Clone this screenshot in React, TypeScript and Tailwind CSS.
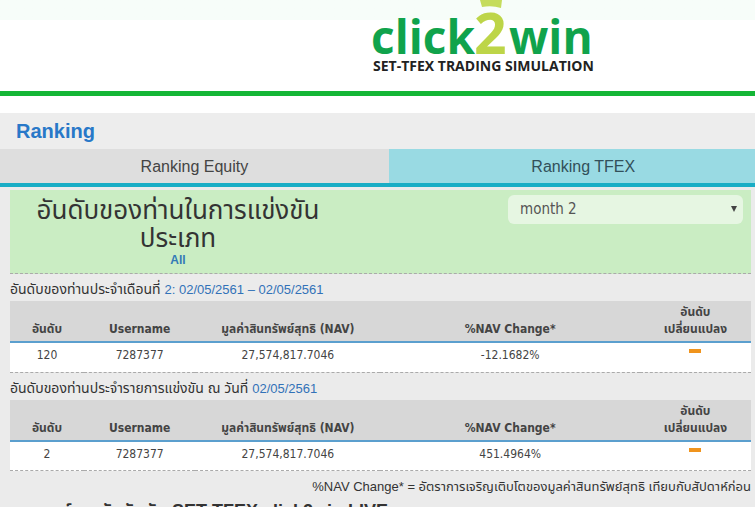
import React, { useState } from 'react';

interface RankRow {
  rank: string;
  username: string;
  nav: string;
  change: string;
}

const monthly: RankRow = { rank: '120', username: '7287377', nav: '27,574,817.7046', change: '-12.1682%' };
const overall: RankRow = { rank: '2', username: '7287377', nav: '27,574,817.7046', change: '451.4964%' };

function Logo() {
  return (
    <svg width="224" height="76" viewBox="0 0 224 76" role="img" aria-label="click2win SET-TFEX trading simulation">
      <path d="M110 0h22l-1 8q-9-3-19-1z" fill="#c5dc5c" />
      <g fontFamily="'Open Sans', 'Noto Sans', sans-serif" fontWeight="700">
        <text x="1" y="54" fontSize="46" fill="#10a34c">click</text>
        <text x="104" y="54" fontSize="57" fill="#bdd548">2</text>
        <text x="139" y="54" fontSize="46" fill="#10a34c">win</text>
        <text x="3" y="71" fontSize="14" fill="#222">SET-TFEX TRADING SIMULATION</text>
      </g>
    </svg>
  );
}

function RankTable({ row, label }: { row: RankRow; label: string }) {
  return (
    <table aria-label={label} className="w-full table-fixed border-collapse text-center text-xs font-['DejaVu_Sans_Condensed','Noto_Sans_Thai',sans-serif]">
      <thead>
        <tr className="h-[41px] border-b-2 border-[#5b9fce] bg-[#d7d7d7] align-bottom leading-[17px] text-[#444]">
          <th className="w-[10%] pb-[3px]">อันดับ</th>
          <th className="w-[15%] pb-[3px]">Username</th>
          <th className="w-[25%] pb-[3px]">มูลค่าสินทรัพย์สุทธิ (NAV)</th>
          <th className="w-[35%] pb-[3px]">%NAV Change*</th>
          <th className="w-[15%] pb-[3px]">อันดับ<br />เปลี่ยนแปลง</th>
        </tr>
      </thead>
      <tbody>
        <tr className="h-[30px] border-b border-dashed border-[#aaa] bg-white align-top leading-4 text-[#444]">
          <td className="pt-1">{row.rank}</td>
          <td className="pt-1">{row.username}</td>
          <td className="pt-1">{row.nav}</td>
          <td className="pt-1">{row.change}</td>
          <td className="pt-1.5">
            <span className="mx-auto block h-1 w-3 bg-[#f0941d]" role="img" aria-label="unchanged" />
          </td>
        </tr>
      </tbody>
    </table>
  );
}

export default function App() {
  const [month, setMonth] = useState('2');

  return (
    <div className="min-h-screen overflow-hidden bg-[#ebebeb] font-['Liberation_Sans','Noto_Sans_Thai',sans-serif] text-[#333]">
      {/* Brand header */}
      <header className="border-b-[5px] border-[#14b636] bg-linear-to-b from-[#f7fdf9] from-[20px] to-white to-[20px] pb-[15px]">
        <div className="ml-[49%]">
          <a href="#home" className="block w-56">
            <Logo />
          </a>
        </div>
      </header>
      <div className="h-[17px] bg-white" />

      <h1 className="bg-[#ededed] px-4 text-xl leading-9 font-bold text-[#2878c8]">Ranking</h1>

      {/* Tabs run slightly past the right edge */}
      <nav className="grid w-[103%] grid-cols-2 border-b-4 border-[#19adc5] text-center text-base text-[#444]">
        <button type="button" className="h-[34px] bg-[#dedede] pt-0.5">Ranking Equity</button>
        <button type="button" className="h-[34px] bg-[#99dae3] pt-0.5 text-[#32505a]">Ranking TFEX</button>
      </nav>

      <main className="pt-[3px] pr-1 pl-2.5">
        <section className="flex h-[84px] items-start justify-between border-b border-dashed border-[#aaa] bg-[#caedc3] pr-2">
          <div className="w-[336px] px-4 pt-1.5 text-center">
            <h2 className="text-[26px] leading-7 text-[#333]">อันดับของท่านในการแข่งขัน<br />ประเภท</h2>
            <a href="#all" className="block text-xs leading-4 font-bold text-[#337ab7]">All</a>
          </div>
          <div className="relative mt-[5px] w-[235px]">
            <select
              aria-label="Month"
              value={month}
              onChange={(e) => setMonth(e.target.value)}
              className="block h-[29px] w-full appearance-none rounded-md bg-[#e6f6e2] px-3 text-[15px] text-[#555] font-['DejaVu_Sans_Condensed',sans-serif]"
            >
              <option value="1">month 1</option>
              <option value="2">month 2</option>
            </select>
            <svg className="pointer-events-none absolute top-[11px] right-1.5" width="6" height="6" viewBox="0 0 6 6">
              <path d="M0 0h6L3 6z" fill="#444" />
            </svg>
          </div>
        </section>

        <p className="pt-[7px] pb-[3px] text-sm leading-4">
          อันดับของท่านประจำเดือนที่ <span className="text-[13px] text-[#3272b8]">2: 02/05/2561 – 02/05/2561</span>
        </p>
        <RankTable row={monthly} label="Monthly ranking" />

        <p className="pt-[7px] pb-[3px] text-sm leading-4">
          อันดับของท่านประจำรายการแข่งขัน ณ วันที่ <span className="text-[13px] text-[#3272b8]">02/05/2561</span>
        </p>
        <RankTable row={overall} label="Overall ranking" />

        <p className="pt-2 text-right text-[13px] leading-4">
          %NAV Change* = อัตราการเจริญเติบโตของมูลค่าสินทรัพย์สุทธิ เทียบกับสัปดาห์ก่อน
        </p>
        <h3 className="px-4 pt-1 text-lg leading-6 font-bold">เกณฑ์การจัดอันดับ SET-TFEX click2win LIVE</h3>
      </main>
    </div>
  );
}
